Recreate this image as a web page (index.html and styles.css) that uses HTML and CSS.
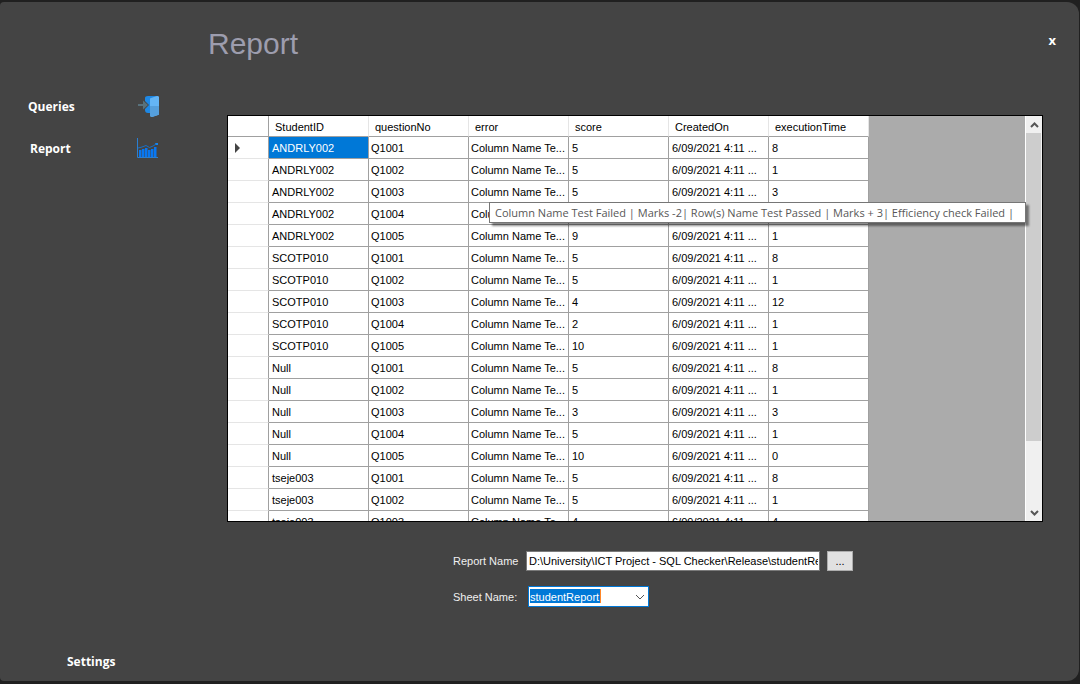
FILE: index.html
```html
<!DOCTYPE html>
<html lang="en">
<head>
<meta charset="utf-8">
<title>Report</title>
<link rel="stylesheet" href="styles.css">
</head>
<body>
<div class="window">
  <nav class="sidebar">
    <button class="nav-item" type="button">
      <span>Queries</span>
      <svg class="nav-icon" viewBox="0 0 24 24" aria-hidden="true">
        <path d="M9 4q0-2 3-2h10v17H12q-3 0-3-3v-1l4-4-4-4z" fill="#1e88e5"/>
        <path d="M14 5q0-1 1-1l6-2q2 0 2 1v17q0 1-1 1l-6 2q-2 0-2-2z" fill="#64b5f6"/>
        <path d="M14 12h9v8q0 1-1 1l-6 2q-2 0-2-2z" fill="#559fdc"/>
        <path d="M2 10h5V6.500l5 4.500-5 4.500V12H2z" fill="#58717c"/>
      </svg>
    </button>
    <button class="nav-item nav-item-current" type="button">
      <span>Report</span>
      <svg class="nav-icon" viewBox="0 0 24 24" aria-hidden="true">
        <path d="M1.500 2v19.500H22" fill="none" stroke="#2b7fd0"/>
        <path d="M3 14h2.500v7H3zM6 13h2.500v8H6zM9 12h2.500v9H9zM12 14h2.500v7H12zM15 13h2.500v8H15zM18 11h2.500v10H18z" fill="#0877f2"/>
        <path d="M2 12l4-1 4-1.500 3.500 2L17 10l4-2.500" fill="none" stroke="#1a6fc4"/>
        <path d="M19 7h3v2h-2z" fill="#1584ee"/>
      </svg>
    </button>
    <button class="nav-item nav-settings" type="button"><span>Settings</span></button>
  </nav>
  <main class="main">
    <header class="header">
      <h1 class="title">Report</h1>
      <button class="close" type="button" aria-label="Close">x</button>
    </header>
    <section class="grid">
      <div class="grid-view">
        <table class="table">
          <thead>
            <tr><th class="row-head"></th><th>StudentID</th><th>questionNo</th><th>error</th><th>score</th><th>CreatedOn</th><th>executionTime</th></tr>
          </thead>
          <tbody id="rows"></tbody>
        </table>
      </div>
      <div class="scrollbar">
        <button class="scroll-button" type="button" aria-label="Scroll up"><svg class="scroll-icon" viewBox="0 0 9 6"><path d="M1 5l3.500-3.500L8 5" fill="none" stroke="#555" stroke-width="2"/></svg></button>
        <div class="scroll-track"><div class="scroll-thumb"></div></div>
        <button class="scroll-button" type="button" aria-label="Scroll down"><svg class="scroll-icon" viewBox="0 0 9 6"><path d="M1 1l3.500 3.500L8 1" fill="none" stroke="#555" stroke-width="2"/></svg></button>
      </div>
      <div class="tooltip" role="tooltip">Column Name Test Failed | Marks -2| Row(s) Name Test Passed | Marks + 3| Efficiency check Failed |</div>
    </section>
    <form class="form">
      <label for="report-name">Report Name</label>
      <div class="field">
        <input class="text-box" id="report-name" type="text" value="D:\University\ICT Project - SQL Checker\Release\studentReport.xlsx">
        <button class="browse" type="button">...</button>
      </div>
      <label for="sheet-name">Sheet Name:</label>
      <div class="field field-sheet">
        <select class="combo" id="sheet-name"><option>studentReport</option></select>
        <svg class="combo-arrow" viewBox="0 0 10 6" aria-hidden="true"><path d="M1 1l4 4 4-4" fill="none" stroke="#555"/></svg>
      </div>
    </form>
  </main>
</div>
<script src="script.js"></script>
</body>
</html>
```
FILE: styles.css
```css
* { box-sizing: border-box; }

body {
  margin: 0;
  background: #202020;
  font: 11px/14px "Liberation Sans", Arial, sans-serif;
}

button, input, select { font: inherit; }

.window {
  display: flex;
  min-height: calc(100vh - 5px);
  margin: 2px 1px 3px 0;
  background: #444;
  border-radius: 4px 12px 12px 4px;
}

/* Navigation */
.sidebar {
  display: flex;
  flex-direction: column;
  flex: 0 0 160px;
  padding: 92px 0 8px 28px;
  gap: 18px;
}

.nav-item {
  display: flex;
  align-items: center;
  justify-content: space-between;
  height: 24px;
  padding: 0;
  border: 0;
  background: none;
  color: #fff;
  font: bold 12px/18px "Open Sans", sans-serif;
}

.nav-item span { padding-top: 2px; }

.nav-item-current { padding-left: 2px; }

.nav-icon { width: 24px; height: 24px; }

.nav-settings { margin-top: auto; padding-left: 39px; }

/* Main area */
.main {
  flex: 1;
  min-width: 0;
  padding: 24px 23px 0 48px;
}

.header {
  display: flex;
  justify-content: space-between;
  align-items: center;
}

.title {
  margin: 0;
  color: #9d9dae;
  font-size: 30px;
  font-weight: normal;
  line-height: 36px;
}

.close {
  padding: 0 0 8px;
  border: 0;
  background: none;
  color: #fff;
  font: bold 13px/18px "Open Sans", sans-serif;
}

/* Data grid */
.grid {
  position: relative;
  display: flex;
  height: 407px;
  margin: 53px 13px 0 19px;
  border: 1px solid #000;
  background: #ababab;
}

.grid-view { flex: 1; min-width: 0; overflow: hidden; }

.table {
  width: 641px;
  table-layout: fixed;
  border-collapse: separate;
  border-spacing: 0;
  background: #fff;
  color: #000;
}

.table th, .table td {
  height: 22px;
  padding: 0 0 0 3px;
  border-right: 1px solid #a0a0a0;
  border-bottom: 1px solid #a0a0a0;
  text-align: left;
  white-space: nowrap;
  font-weight: normal;
}

.table td:nth-child(3), .table td:nth-child(4) { padding-left: 2px; }

.table thead th {
  height: 21px;
  padding-top: 1px;
  padding-left: 6px;
  border-right-color: #e5e5e5;
}

.table .row-head {
  width: 41px;
  padding-left: 7px;
  border-right-color: #a0a0a0;
}

.table tbody .row-head { border-bottom-color: #e5e5e5; }

.table .selected { background: #0078d7; color: #fff; }

.row-marker { display: block; width: 5px; height: 10px; }

.scrollbar {
  display: flex;
  flex-direction: column;
  flex: 0 0 17px;
  border-left: 1px solid #fff;
  background: #f0f0f0;
}

.scroll-button {
  display: grid;
  place-items: center;
  height: 17px;
  padding: 0;
  border: 0;
  background: #f0f0f0;
}

.scroll-icon { width: 9px; height: 6px; }

.scroll-track { flex: 1; }

.scroll-thumb { height: 83%; margin-right: 1px; background: #cdcdcd; }

.tooltip {
  position: absolute;
  top: 86px;
  left: 261px;
  padding: 0 11px 0 5px;
  border: 1px solid #767676;
  background: #fff;
  box-shadow: 3px 3px 2px rgba(0, 0, 0, 0.45);
  color: #575757;
  font: 11px/19px "Open Sans", sans-serif;
  white-space: nowrap;
}

/* Report selection */
.form {
  display: grid;
  grid-template-columns: 73px 1fr;
  row-gap: 15px;
  align-items: center;
  margin: 29px 0 0 245px;
  color: #f0f0f0;
}

.field { display: flex; align-items: center; gap: 7px; }

.field-sheet { position: relative; width: 123px; padding-left: 2px; }

.text-box {
  width: 294px;
  height: 20px;
  padding: 0 1px 0 2px;
  border: 1px solid #7a7a7a;
  background: #fff;
  color: #000;
}

.browse {
  width: 26px;
  height: 20px;
  padding: 0;
  border: 1px solid #adadad;
  background: #e1e1e1;
  color: #000;
}

.combo {
  width: 100%;
  height: 21px;
  padding: 0 1px;
  appearance: none;
  border: 1px solid #0078d7;
  border-radius: 0;
  background:
    linear-gradient(#ff8728, #ff8728) 71px 2px / 1px 14px no-repeat,
    linear-gradient(#0078d7, #0078d7) 1px 2px / 70px 14px no-repeat,
    #fff;
  color: #fff;
}

.combo-arrow {
  position: absolute;
  top: 8px;
  right: 4px;
  width: 10px;
  height: 6px;
  pointer-events: none;
}
```
FILE: script.js
```js
const groups = [
  ["ANDRLY002", [[5, 8], [5, 1], [5, 3], [5, 1], [9, 1]]],
  ["SCOTP010", [[5, 8], [5, 1], [4, 12], [2, 1], [10, 1]]],
  ["Null", [[5, 8], [5, 1], [3, 3], [5, 1], [10, 0]]],
  ["tseje003", [[5, 8], [5, 1], [4, 4]]]
];

const marker = '<svg class="row-marker" viewBox="0 0 5 10"><path d="M0 0l5 5-5 5z" fill="#444"/></svg>';
const body = document.getElementById("rows");

groups.forEach(([student, results], group) => {
  results.forEach(([score, time], index) => {
    const first = group === 0 && index === 0;
    const row = body.insertRow();
    row.innerHTML =
      `<th class="row-head">${first ? marker : ""}</th>` +
      `<td${first ? ' class="selected"' : ""}>${student}</td>` +
      `<td>Q100${index + 1}</td>` +
      "<td>Column Name Te...</td>" +
      `<td>${score}</td>` +
      "<td>6/09/2021 4:11 ...</td>" +
      `<td>${time}</td>`;
  });
});
```
